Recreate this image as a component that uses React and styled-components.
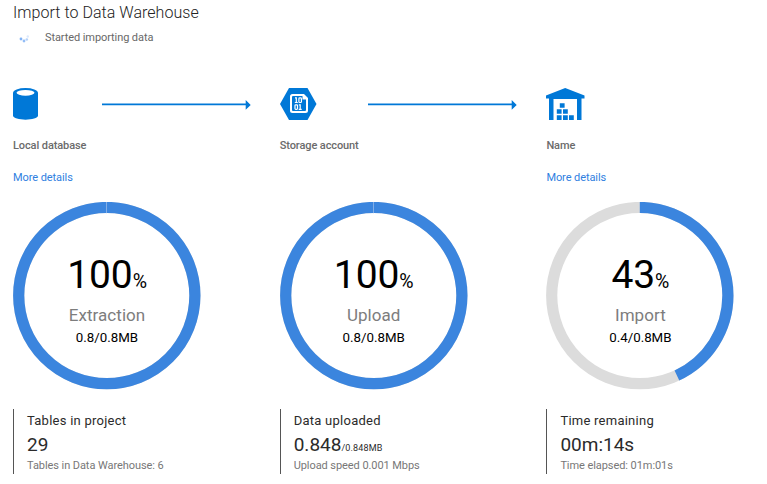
import React from "react";
import styled, { createGlobalStyle } from "styled-components";

const Global = createGlobalStyle`
  * { box-sizing: border-box; }
  body { margin: 0; background: #fff; font-family: Roboto, sans-serif; }
`;
const Page = styled.main`
  width: 767px; height: 484px; overflow: hidden; padding: 0 13px;
`;
const Title = styled.h1`
  margin: 0; height: 25px; font-size: 16px; line-height: 25px; font-weight: 300; color: #222; letter-spacing: 0.04px;
`;
const Status = styled.div`
  display: flex; align-items: center; height: 25px; padding-left: 6px; gap: 15px;
  font-size: 11px; letter-spacing: -0.09px; color: #686868;
  svg { width: 11px; height: 12px; margin-top: 2px; }
`;
const Columns = styled.div`
  display: grid; grid-template-columns: 266.7px 266.7px 1fr; padding-top: 34px;
`;
const Column = styled.section`display: flex; flex-direction: column;`;
const Head = styled.div`
  display: flex; height: 40px; align-items: center; justify-content: space-between; padding-right: 29px;
  svg { display: block; }
`;
const Name = styled.div`
  margin-top: 14px; height: 16px; line-height: 16px; font-size: 11px; font-weight: 500; letter-spacing: -0.1px; color: #6b6b6b;
`;
const LinkRow = styled.div`
  margin-top: 16px; height: 16px; line-height: 16px; font-size: 11px; letter-spacing: -0.08px;
  a { color: #2f80df; text-decoration: none; }
`;
const Gauge = styled.div`
  display: grid; width: 187.5px; height: 188px; margin-top: 16px;
  > * { grid-area: 1 / 1; }
`;
const Center = styled.div`
  display: flex; flex-direction: column; align-items: center; padding-top: 50px;
`;
const Percent = styled.div`
  font-size: 39px; line-height: 46px; height: 46px; color: #000; white-space: nowrap; letter-spacing: -0.1px;
  small { font-size: 19.5px; line-height: 1; }
`;
const Phase = styled.div`font-size: 17px; line-height: 22px; color: #7d7d7d; margin-top: 6px; letter-spacing: 0.05px;`;
const Amount = styled.div`font-size: 13.3px; line-height: 18px; margin-top: 3px; color: #000;`;
const Stats = styled.div`
  border-left: 1px solid #555; width: 200px; height: 65px; margin-top: 19px; padding: 1px 0 0 13px; color: #2b2b2b;
`;
const Label = styled.div`font-size: 13px; line-height: 22px; letter-spacing: 0.25px;`;
const Value = styled.div`
  font-size: 19px; line-height: 26px; height: 25px;
  small { font-size: 9px; line-height: 1; letter-spacing: 0.15px; }
`;
const Note = styled.div`font-size: 11px; line-height: 17px; color: #777; letter-spacing: -0.07px;`;

const Spinner = () => (
  <svg viewBox="0 0 11 12">
    <circle cx="2" cy="6" r="1.4" fill="#82b3f5" />
    <circle cx="5" cy="8" r="1.4" fill="#93bdf6" />
    <circle cx="7.8" cy="6.5" r="1.3" fill="#b5d2f9" />
    <circle cx="8.8" cy="3.5" r="1.2" fill="#dce9fc" />
  </svg>
);
const Database = () => (
  <svg width="26" height="34" viewBox="0 0 26 34">
    <path d="M0 6v22.5c0 5.5 25 5.5 25 0V6z" fill="#0078d7" />
    <ellipse cx="12.5" cy="6" rx="12.5" ry="5" fill="#0078d7" />
    <ellipse cx="12.5" cy="5.8" rx="9" ry="2.9" fill="#fff" />
  </svg>
);
const Storage = () => (
  <svg width="37" height="34" viewBox="0 0 37 34">
    <path d="M9 1h18.5l9 16-9 16H9L0 17z" fill="#0078d7" />
    <path d="M12.5 7H24l4 4v12.5a2.5 2.5 0 0 1-2.5 2.5h-13a2.5 2.5 0 0 1-2.5-2.5v-14A2.5 2.5 0 0 1 12.5 7z" fill="#fff" />
    <path d="M13 9h9.5v3.5H26V23a1 1 0 0 1-1 1H13a1 1 0 0 1-1-1V10a1 1 0 0 1 1-1z" fill="#0078d7" />
    <g fill="none" stroke="#fff" strokeWidth="1.2">
      <path d="M15 10.9h1.3v4.6M14.8 15.5h3" />
      <rect x="18.9" y="10.9" width="2.5" height="4.6" rx=".8" />
      <rect x="15" y="17.8" width="2.5" height="4.6" rx=".8" />
      <path d="M18.9 17.8h1.3v4.6M18.7 22.4h3" />
    </g>
  </svg>
);
const Warehouse = () => (
  <svg width="39" height="34" viewBox="0 0 39 34" fill="#0078d7">
    <path d="M0 8.5 19.2 1 38.5 8.5V11.5H35.5V33H31V12H7.5V33H3V11.5H0z" />
    <path d="M13.8 16.2h4.8v4.6h-4.8zM10.8 22.2h4.8v4.6h-4.8zM17 22.2h4.8v4.6H17zM10.8 28.3h4.8v4.6h-4.8zM17 28.3h4.8v4.6H17zM23 28.3h4.8v4.6H23z" />
  </svg>
);
const Arrow = () => (
  <svg width="149" height="12" viewBox="0 0 149 12" fill="#0078d7">
    <path d="M0 5.6h143.7V2l5 4.9-5 4.9V7.3H0z" />
  </svg>
);
const R = 88.1;
const LENGTH = 2 * Math.PI * R;
const Ring = ({ value }) => (
  <svg width="188" height="188" viewBox="0 0 188 188" fill="none" strokeWidth="11.2">
    <circle cx="93.8" cy="93.6" r={R} stroke="#dcdcdc" />
    <circle cx="93.8" cy="93.6" r={R} stroke="#3b85de" transform="rotate(-90 93.8 93.6)"
      strokeDasharray={`${(LENGTH * value) / 100} ${LENGTH}`} />
    {value === 100 && <path d="M93.5 0v11.2" stroke="#83aee6" strokeWidth="1" />}
  </svg>
);

const columns = [
  { name: "Local database", link: true, arrow: true, icon: <Database />, pct: 100, phase: "Extraction", amount: "0.8/0.8MB", label: "Tables in project", value: "29", note: "Tables in Data Warehouse: 6" },
  { name: "Storage account", arrow: true, icon: <Storage />, pct: 100, phase: "Upload", amount: "0.8/0.8MB", label: "Data uploaded", value: "0.848", unit: "/0.848MB", note: "Upload speed 0.001 Mbps" },
  { name: "Name", link: true, icon: <Warehouse />, pct: 43, phase: "Import", amount: "0.4/0.8MB", label: "Time remaining", value: "00m:14s", note: "Time elapsed: 01m:01s" },
];

export default function App() {
  return (
    <Page>
      <Global />
      <Title>Import to Data Warehouse</Title>
      <Status><Spinner /><span>Started importing data</span></Status>
      <Columns>
        {columns.map((c) => (
          <Column key={c.name}>
            <Head>{c.icon}{c.arrow && <Arrow />}</Head>
            <Name>{c.name}</Name>
            <LinkRow>{c.link && <a href="#">More details</a>}</LinkRow>
            <Gauge>
              <Ring value={c.pct} />
              <Center>
                <Percent>{c.pct}<small>%</small></Percent>
                <Phase>{c.phase}</Phase>
                <Amount>{c.amount}</Amount>
              </Center>
            </Gauge>
            <Stats>
              <Label>{c.label}</Label>
              <Value>{c.value}{c.unit && <small>{c.unit}</small>}</Value>
              <Note>{c.note}</Note>
            </Stats>
          </Column>
        ))}
      </Columns>
    </Page>
  );
}
